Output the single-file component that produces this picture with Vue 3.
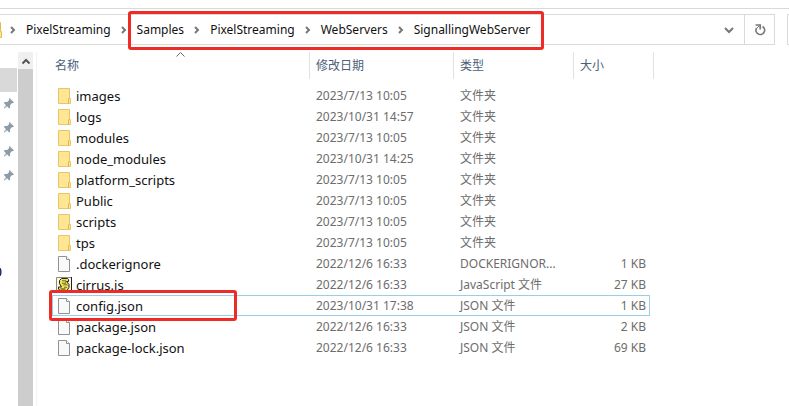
<script setup>
const crumbs = ['Samples', 'PixelStreaming', 'WebServers', 'SignallingWebServer']
const folder = (name, date) => ({ name, date, type: '文件夹', size: '', icon: 'folder' })
const file = (name, date, type, size, icon = 'file') => ({ name, date, type, size, icon })
const rows = [
  folder('images', '2023/7/13 10:05'),
  folder('logs', '2023/10/31 14:57'),
  folder('modules', '2023/7/13 10:05'),
  folder('node_modules', '2023/10/31 14:25'),
  folder('platform_scripts', '2023/7/13 10:05'),
  folder('Public', '2023/7/13 10:05'),
  folder('scripts', '2023/7/13 10:05'),
  folder('tps', '2023/7/13 10:05'),
  file('.dockerignore', '2022/12/6 16:33', 'DOCKERIGNOR...', '1 KB'),
  file('cirrus.js', '2022/12/6 16:33', 'JavaScript 文件', '27 KB', 'script'),
  { ...file('config.json', '2023/10/31 17:38', 'JSON 文件', '1 KB'), focused: true },
  file('package.json', '2022/12/6 16:33', 'JSON 文件', '2 KB'),
  file('package-lock.json', '2022/12/6 16:33', 'JSON 文件', '69 KB')
]
</script>

<template>
  <div class="explorer">
    <header class="toolbar">
      <div class="address">
        <nav class="crumbs" aria-label="路径">
          <svg class="root" width="4" height="16" viewBox="0 0 4 16"><path d="M-2 .5h2.500v9h1v6H-2z" fill="#ffe694" stroke="#e3bc4c" /></svg>
          <svg class="sep" width="26" height="10" viewBox="0 0 26 10"><path d="M11 2l3 3-3 3" /></svg>
          <a href="#">PixelStreaming</a>
          <svg class="sep" width="26" height="10" viewBox="0 0 26 10"><path d="M11 2l3 3-3 3" /></svg>
          <span class="marked">
            <template v-for="(c, i) in crumbs" :key="c">
              <svg v-if="i" class="sep" width="26" height="10" viewBox="0 0 26 10"><path d="M11 2l3 3-3 3" /></svg>
              <a href="#">{{ c }}</a>
            </template>
          </span>
        </nav>
        <button class="tool history" aria-label="历史记录">
          <svg width="12" height="10" viewBox="0 0 12 10"><path d="M2 3l4 4 4-4" fill="none" stroke="#777" stroke-width="2" /></svg>
        </button>
        <button class="tool refresh" aria-label="刷新">
          <svg width="12" height="14" viewBox="0 0 12 14"><path d="M8.500 3.500A4.300 4.300 0 1 1 2.600 5" fill="none" stroke="#777" stroke-width="1.700" /><path d="M1.500 2h4.700v4.500" fill="none" stroke="#777" stroke-width="1.700" /><path d="M6 2L3 5" stroke="#777" /></svg>
        </button>
      </div>
      <div class="search"></div>
    </header>
    <div class="body">
      <aside class="quick">
        <div class="selected"></div>
        <svg v-for="n in 4" :key="n" class="pin" width="12" height="24" viewBox="0 0 12 24">
          <path d="M6.500 7l4.500 4.500-1 .8-1-.3-2 2.200.2 2.300-1 1L4 15.300.8 18l-.5-.5L3 14.200 .8 12l1-1 2.400.1L6.300 9 6 8z" transform="translate(-1 -1)" fill="#8d9ba8" />
        </svg>
        <svg class="clipped" width="2" height="10" viewBox="0 0 2 10"><ellipse cx="0" cy="5" rx="1.500" ry="4" fill="#1c2d78" /></svg>
      </aside>
      <div class="scroll">
        <button aria-label="向上滚动"><svg width="10" height="8" viewBox="0 0 10 8"><path d="M1.500 6.500L5 3l3.500 3.500" fill="none" stroke="#555" stroke-width="2" /></svg></button>
        <div class="thumb"></div>
      </div>
      <main class="files">
        <table>
          <colgroup><col class="c-name"><col class="c-date"><col class="c-type"><col class="c-size"></colgroup>
          <thead>
            <tr>
              <th>名称<svg class="sort" width="9" height="5" viewBox="0 0 9 5"><path d="M.5 4.500l4-4 4 4" fill="none" stroke="#666" /></svg></th>
              <th>修改日期</th>
              <th>类型</th>
              <th>大小</th>
            </tr>
          </thead>
          <tbody>
            <tr v-for="r in rows" :key="r.name" :class="{ focused: r.focused }">
              <td class="name">
                <div class="entry">
                  <svg v-if="r.icon === 'folder'" width="16" height="18" viewBox="0 0 16 18">
                    <path d="M2.500 1.500h11v10h1v5h-12z" fill="#ffe694" stroke="#e8c665" />
                    <path d="M12.500 16.500v-4.500l1-1" fill="none" stroke="#dfb64a" />
                  </svg>
                  <svg v-else-if="r.icon === 'file'" width="16" height="18" viewBox="0 0 16 18">
                    <path d="M2.500 1.500h8l3 3v12h-11z" fill="#f8f9f9" stroke="#929292" />
                    <path d="M10.500 1.500v3h3" fill="#fff" stroke="#929292" />
                  </svg>
                  <svg v-else width="16" height="18" viewBox="0 0 16 18">
                    <path d="M.5 1.500h15v14H.5z" fill="#f7f5e8" stroke="#8b8b80" />
                    <path d="M15.500 1v14.500H1" fill="none" stroke="#222" />
                    <path d="M5.500 2.500h6l1 1v2h-2l2.500 3v3l-2 3H4l-1.500-1.500V11h3L3.500 7.500v-3z" fill="#efe34e" stroke="#222" />
                    <path d="M6 5h4M6 7h4M7.500 9h4M8 11h3M4.500 13h5" stroke="#3a3510" />
                    <path d="M6 6h3M8 10h3" stroke="#fff7a0" />
                  </svg>
                  <span>{{ r.name }}</span>
                </div>
              </td>
              <td>{{ r.date }}</td>
              <td>{{ r.type }}</td>
              <td class="size">{{ r.size }}</td>
            </tr>
          </tbody>
        </table>
      </main>
    </div>
  </div>
</template>

<style>
body { margin: 0; background: #fff; }
</style>

<style scoped>
.explorer {
  display: flex;
  flex-direction: column;
  min-height: 100vh;
  box-sizing: border-box;
  padding-top: 8px;
  overflow: hidden;
  font: 12px/20px "Noto Sans", "Noto Sans CJK SC", sans-serif;
  color: #6d6d6d;
}
svg { flex: none; display: block; }
button { display: flex; align-items: center; justify-content: center; border: 0; padding: 0; background: none; }
.toolbar { display: flex; gap: 12px; border-top: 1px solid #d9d9d9; padding: 5px 0 7px; }
.address { flex: 1; display: flex; height: 29px; border: 1px solid #d9d9d9; border-left: 0; }
.crumbs { flex: 1; display: flex; align-items: center; }
.crumbs a { color: #111; text-decoration: none; font-size: 12px; }
.root { margin-right: -4px; }
.sep path { fill: none; stroke: #777; stroke-width: 2; }
.marked { position: relative; display: flex; align-items: center; }
.marked::after {
  content: "";
  position: absolute;
  inset: -9px -14px -10px -9px;
  border: 3px solid #ee2b24;
  border-radius: 3px;
  pointer-events: none;
}
.history { width: 30px; }
.refresh { width: 30px; border-left: 1px solid #d9d9d9; }
.search { width: 1px; border: 1px solid #d9d9d9; border-right: 0; }
.body { flex: 1; display: flex; }
.quick { width: 18px; padding-top: 16px; }
.selected { height: 24px; margin-right: 1px; background: #d9d9d9; }
.pin { margin-left: 4px; }
.clipped { margin-top: 79px; }
.scroll { width: 15px; display: flex; flex-direction: column; }
.scroll button { height: 17px; background: #f0f0f0; }
.thumb { flex: 1; background: #cdcdcd; }
.files { flex: 1; margin-left: 3px; padding-left: 15px; border-left: 1px solid #f2f2f2; }
table { width: 602px; table-layout: fixed; border-collapse: separate; border-spacing: 0; }
.c-name { width: 258px; }
.c-date { width: 144px; }
.c-type { width: 120px; }
.c-size { width: 80px; }
th {
  position: relative;
  height: 27px;
  padding: 0 6px;
  border-right: 1px solid #e2e2e2;
  text-align: left;
  font-weight: 400;
  color: #4c607a;
}
th:first-child { padding-left: 3px; }
.sort { position: absolute; top: 0; left: calc(50% - 5px); }
thead::after { content: ""; display: block; height: 6px; }
td { height: 21px; padding: 0 6px; line-height: 20px; white-space: nowrap; }
td.name { padding: 0 4px; color: #111; }
.entry { display: flex; align-items: center; gap: 4px; font-size: 13px; }
td.size { padding-right: 8px; text-align: right; }
tbody tr { position: relative; }
.focused::after {
  content: "";
  position: absolute;
  inset: 0 4px 0 0;
  border: 1px solid #99cde8;
  pointer-events: none;
}
.focused .name { position: relative; }
.focused .name::after {
  content: "";
  position: absolute;
  z-index: 1;
  inset: -5px 73px -5px -3px;
  border: 3px solid #ee2b24;
  border-radius: 3px;
  pointer-events: none;
}
</style>
